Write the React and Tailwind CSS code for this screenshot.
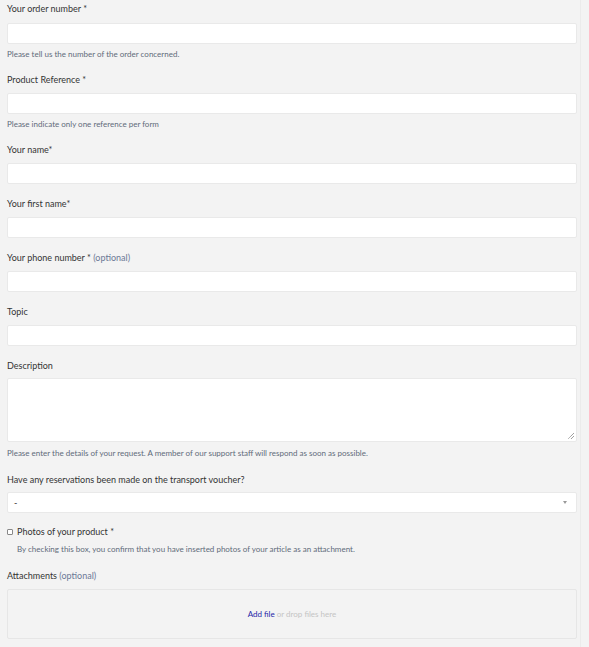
export default function App() {
  const font = { fontFamily: "Lato, 'Noto Sans', sans-serif" };
  const Label = ({ children, className = "" }) => (
    <div className={"text-[9px] leading-[12px] text-[#333] " + className}>{children}</div>
  );
  const Help = ({ children, className = "" }) => (
    <div className={"text-[8px] leading-[10px] text-[#5f6b7a] " + className}>{children}</div>
  );
  const Input = ({ className = "" }) => (
    <div className={"h-[21px] bg-white border border-[#e9e9e9] rounded-[2px] " + className}></div>
  );
  return (
    <div style={font} className="w-[589px] h-[647px] bg-[#f3f3f3] overflow-hidden">
      <div className="w-[581px] h-full border-r border-[#ebebeb] pl-[7px] pr-[3px] pt-[3px] flex flex-col">
        <Label>Your order number *</Label>
        <Input className="mt-[8px]" />
        <Help className="mt-[5px]">Please tell us the number of the order concerned.</Help>

        <Label className="mt-[15px]">Product Reference *</Label>
        <Input className="mt-[7px]" />
        <Help className="mt-[5px]">Please indicate only one reference per form</Help>

        <Label className="mt-[15px]">Your name*</Label>
        <Input className="mt-[7px]" />

        <Label className="mt-[14px]">Your first name*</Label>
        <Input className="mt-[7px]" />

        <Label className="mt-[14px]">
          Your phone number * <span className="text-[#6b7896]">(optional)</span>
        </Label>
        <Input className="mt-[7px]" />

        <Label className="mt-[14px]">Topic</Label>
        <Input className="mt-[7px]" />

        <Label className="mt-[14px]">Description</Label>
        <div className="mt-[6px] h-[64px] bg-white border border-[#e9e9e9] rounded-[2px] relative">
          <svg className="absolute right-[1px] bottom-[1px]" width="8" height="8" viewBox="0 0 8 8">
            <path d="M7 1 L1 7 M7 4 L4 7" stroke="#555" strokeWidth="0.8" strokeDasharray="1 0.6" />
          </svg>
        </div>
        <Help className="mt-[6px]">
          Please enter the details of your request. A member of our support staff will respond as soon as possible.
        </Help>

        <Label className="mt-[16px]">Have any reservations been made on the transport voucher?</Label>
        <div className="mt-[6px] h-[21px] bg-white border border-[#e9e9e9] rounded-[2px] flex items-center justify-between pl-[6px] pr-[9px]">
          <span className="text-[9px] text-[#333]">-</span>
          <svg width="4" height="3" viewBox="0 0 4 3">
            <path d="M0 0 L4 0 L2 3 Z" fill="#999" />
          </svg>
        </div>

        <div className="mt-[13px] flex items-center h-[12px]">
          <div className="w-[6px] h-[6px] border border-[#888] bg-white rounded-[1px]"></div>
          <span className="ml-[4px] text-[9px] leading-[12px] text-[#333]">Photos of your product *</span>
        </div>
        <Help className="mt-[6px] ml-[10px]">
          By checking this box, you confirm that you have inserted photos of your article as an attachment.
        </Help>

        <Label className="mt-[16px]">
          Attachments <span className="text-[#6b7896]">(optional)</span>
        </Label>
        <div className="mt-[7px] h-[50px] border border-[#e6e6e6] rounded-[2px] flex items-center justify-center">
          <span className="text-[8px] leading-[10px]">
            <span className="text-[#1f1fa8]">Add file</span>
            <span className="text-[#c4c4c4]"> or drop files here</span>
          </span>
        </div>
      </div>
    </div>
  );
}
